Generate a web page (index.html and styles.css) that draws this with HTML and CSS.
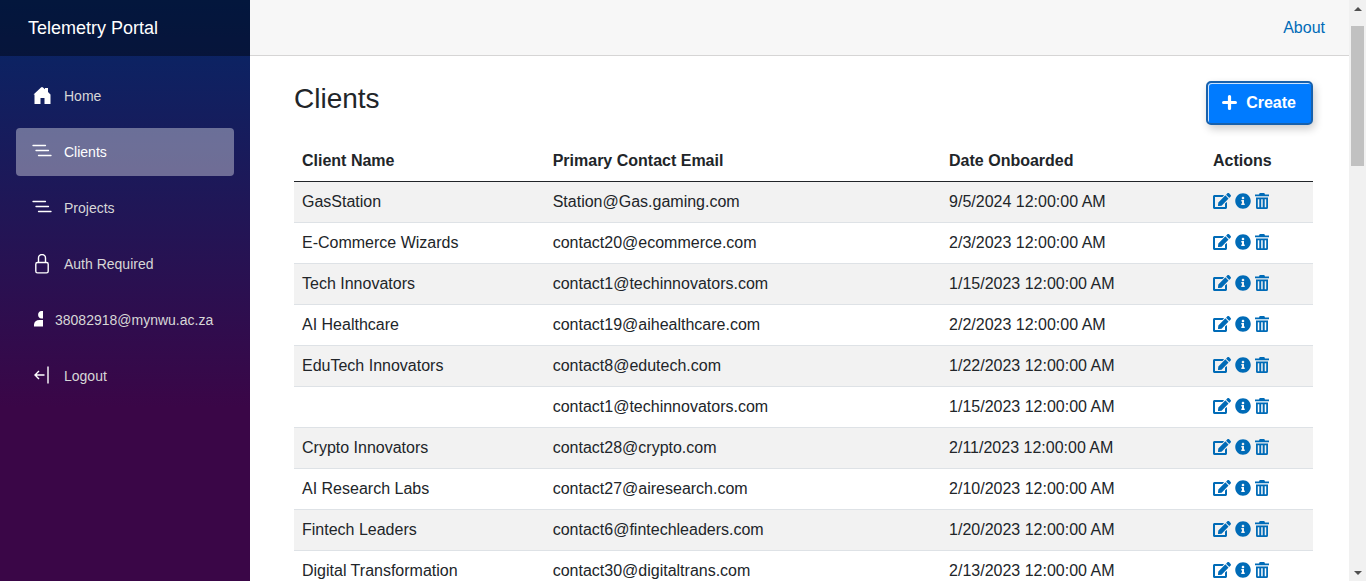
FILE: index.html
```
<!DOCTYPE html>
<html lang="en">
<head>
<meta charset="utf-8">
<title>Clients - Telemetry Portal</title>
<link rel="stylesheet" href="styles.css">
</head>
<body>
<svg class="sprite" aria-hidden="true">
  <symbol id="i-edit" viewBox="0 0 576 512"><path d="M402.600 83.200l90.200 90.200c3.800 3.800 3.800 10 0 13.800L274.400 405.600l-92.800 10.300c-12.400 1.400-22.900-9.100-21.500-21.500l10.300-92.800L388.800 83.200c3.800-3.800 10-3.800 13.800 0zm162-22.900l-48.800-48.800c-15.200-15.200-39.900-15.200-55.200 0l-35.400 35.400c-3.800 3.800-3.800 10 0 13.800l90.200 90.200c3.800 3.800 10 3.800 13.800 0l35.400-35.400c15.200-15.300 15.200-40 0-55.200zM384 346.200V448H64V128h229.800c3.200 0 6.200-1.300 8.500-3.500l40-40c7.600-7.600 2.200-20.500-8.500-20.500H48C21.500 64 0 85.500 0 112v352c0 26.500 21.500 48 48 48h352c26.500 0 48-21.500 48-48V306.200c0-10.700-12.900-16-20.500-8.500l-40 40c-2.200 2.300-3.500 5.300-3.500 8.500z"/></symbol>
  <symbol id="i-info" viewBox="0 0 512 512"><path d="M256 8C119 8 8 119.100 8 256c0 137 111 248 248 248s248-111 248-248C504 119.100 393 8 256 8zm0 110c23.200 0 42 18.800 42 42s-18.800 42-42 42-42-18.800-42-42 18.800-42 42-42zm56 254c0 6.600-5.400 12-12 12h-88c-6.600 0-12-5.400-12-12v-24c0-6.600 5.400-12 12-12h12v-64h-12c-6.600 0-12-5.400-12-12v-24c0-6.600 5.400-12 12-12h64c6.600 0 12 5.400 12 12v100h12c6.600 0 12 5.400 12 12v24z"/></symbol>
  <symbol id="i-trash" viewBox="0 0 14 16"><path fill-rule="evenodd" d="M0 1.500h4L4.700 0h4.600L10 1.500h4v1.800H0zM1 4.600h12V14.500q0 1.500-1.500 1.500h-9Q1 16 1 14.500zM2.800 6.200v8h1.500v-8zM6.200 6.200v8h1.500v-8zM9.700 6.200v8h1.500v-8z"/></symbol>
  <symbol id="i-list" viewBox="0 1 20 20"><path d="M1 4.500h12.500M4 9.500h12.500M6.500 14.500h12.500" fill="none" stroke="currentColor" stroke-width="1.300" stroke-linecap="round"/></symbol>
</svg>
<div class="page">
  <div class="sidebar">
    <div class="brand-row"><a class="brand" href="#">Telemetry Portal</a></div>
    <nav class="nav">
      <a class="nav-link" href="#"><svg class="nav-icon" viewBox="0 1 20 20"><path d="M1.500 9.500L9 2.500q1-1 2 0L13 4.300V3h3v4L18.500 9.500V19h-6v-6h-4v6h-6V9.500z" fill="currentColor"/></svg><span>Home</span></a>
      <a class="nav-link active" href="#"><svg class="nav-icon"><use href="#i-list"/></svg><span>Clients</span></a>
      <a class="nav-link" href="#"><svg class="nav-icon"><use href="#i-list"/></svg><span>Projects</span></a>
      <a class="nav-link" href="#"><svg class="nav-icon" viewBox="0 0 20 20"><path d="M6.500 8.500V4a3.500 3.500 0 0 1 7 0V8.500M5.500 8.500h9q1.700 0 1.700 1.700v7q0 1.700-1.700 1.700h-9q-1.700 0-1.700-1.700v-7q0-1.700 1.700-1.700z" fill="none" stroke="currentColor" stroke-width="1.400"/></svg><span>Auth Required</span></a>
      <a class="nav-link user" href="#"><svg class="nav-icon" viewBox="0 1 12 20"><path d="M11 2v7.500H9.500C5 9.500 5 2 9.500 2zM11 11v6.500H2V15.500Q2.500 11 7.500 11z" fill="currentColor"/></svg><span>38082918@mynwu.ac.za</span></a>
      <a class="nav-link" href="#"><svg class="nav-icon" viewBox="0 1 20 20"><path d="M16 1.500v17M12.500 10H3.500M7 6l-4 4 4 4" fill="none" stroke="currentColor" stroke-width="1.400"/></svg><span>Logout</span></a>
    </nav>
  </div>
  <main class="main">
    <div class="top-row"><a class="about" href="#">About</a></div>
    <article class="content">
      <header class="heading">
        <h1 class="title">Clients</h1>
        <button class="create" type="button"><svg class="plus" viewBox="0 0 14 14"><path d="M7 1.500v11M1.500 7h11" stroke="currentColor" stroke-width="3" stroke-linecap="round"/></svg>Create</button>
      </header>
      <table class="table">
        <thead><tr><th class="c-name">Client Name</th><th class="c-mail">Primary Contact Email</th><th class="c-date">Date Onboarded</th><th>Actions</th></tr></thead>
        <tbody id="rows"></tbody>
      </table>
    </article>
  </main>
  <div class="scrollbar" aria-hidden="true">
    <span class="arrow up"></span><span class="track"><span class="thumb"></span></span><span class="arrow down"></span>
  </div>
</div>
<script src="clients.js"></script>
</body>
</html>
```
FILE: clients.js
```
const clients = [
  ["GasStation", "Station@Gas.gaming.com", "9/5/2024"],
  ["E-Commerce Wizards", "contact20@ecommerce.com", "2/3/2023"],
  ["Tech Innovators", "contact1@techinnovators.com", "1/15/2023"],
  ["AI Healthcare", "contact19@aihealthcare.com", "2/2/2023"],
  ["EduTech Innovators", "contact8@edutech.com", "1/22/2023"],
  ["", "contact1@techinnovators.com", "1/15/2023"],
  ["Crypto Innovators", "contact28@crypto.com", "2/11/2023"],
  ["AI Research Labs", "contact27@airesearch.com", "2/10/2023"],
  ["Fintech Leaders", "contact6@fintechleaders.com", "1/20/2023"],
  ["Digital Transformation", "contact30@digitaltrans.com", "2/13/2023"]
];
const action = (icon, label) =>
  `<a class="action" href="#" aria-label="${label}"><svg class="icon ${icon}"><use href="#i-${icon}"/></svg></a>`;
document.getElementById("rows").innerHTML = clients.map(([name, mail, date]) =>
  `<tr><td>${name}</td><td>${mail}</td><td>${date} 12:00:00 AM</td><td><div class="actions">` +
  action("edit", "Edit") + action("info", "Details") + action("trash", "Delete") +
  `</div></td></tr>`).join("");
```
FILE: styles.css
```
*, *::before, *::after { box-sizing: border-box; }
body {
  margin: 0;
  font: 16px/24px "Liberation Sans", Arial, sans-serif;
  color: #212529;
  background: #fff;
}
a { color: #006bb7; text-decoration: none; }
.sprite { display: none; }
.page { display: flex; height: 100vh; overflow: hidden; }

.sidebar {
  flex: 0 0 250px;
  background: linear-gradient(180deg, #052767 0%, #3a0647 70%);
}
.brand-row {
  display: flex;
  align-items: center;
  height: 56px;
  padding-left: 28px;
  background: rgba(0, 0, 0, 0.4);
}
.brand { color: #fff; font-size: 18px; }
.nav { display: flex; flex-direction: column; gap: 8px; padding: 16px; }
.nav-link {
  display: flex;
  align-items: center;
  gap: 12px;
  height: 48px;
  padding: 0 16px;
  border-radius: 4px;
  color: #d7d7d7;
  font-size: 14px;
}
.nav-link.active { color: #fff; background: rgba(255, 255, 255, 0.37); }
.nav-icon { width: 20px; height: 20px; color: #fff; }
.user { gap: 11px; }
.user .nav-icon { width: 12px; }

.main { flex: 1; min-width: 0; }
.top-row {
  display: flex;
  align-items: center;
  justify-content: flex-end;
  height: 56px;
  padding-right: 24px;
  border-bottom: 1px solid #d6d5d5;
  background: #f7f7f7;
}
.content { padding: 25px 36px 0 44px; }
.heading { display: flex; justify-content: space-between; margin-bottom: 16px; }
.title { margin: 0; font-size: 28px; line-height: 36px; font-weight: 400; }
.create {
  display: flex;
  align-items: center;
  gap: 9px;
  height: 44px;
  padding: 0 15px 1px 14px;
  border: 2px solid #1861ac;
  border-radius: 5px;
  background: #007bff;
  box-shadow: inset 1px 1px 0 rgba(255, 255, 255, 0.8), 2px 4px 8px rgba(0, 0, 0, 0.2);
  color: #fff;
  font: bold 16px/24px "Liberation Sans", Arial, sans-serif;
}
.plus { width: 15px; height: 15px; }

.table { width: 100%; border-collapse: collapse; table-layout: fixed; }
.table th { padding: 8px; text-align: left; border-bottom: 1px solid #212529; }
.table td { height: 41px; padding: 8px; border-bottom: 1px solid #dee2e6; white-space: nowrap; }
.table tbody tr:nth-child(odd) { background: #f2f2f2; }
.c-name { width: 24.6%; }
.c-mail { width: 38.9%; }
.c-date { width: 25.9%; }
.actions { display: flex; align-items: center; gap: 4px; height: 24px; padding-bottom: 2px; }
.action { display: flex; }
.icon { height: 16px; fill: currentColor; }
.icon.edit { width: 18px; }
.icon.info { width: 16px; }
.icon.trash { width: 14px; }

.scrollbar { flex: 0 0 17px; display: flex; flex-direction: column; background: #f1f1f1; }
.arrow { display: flex; align-items: center; justify-content: center; height: 17px; }
.arrow::before { content: ""; border: 4px solid transparent; }
.up::before { border-top: 0; border-bottom-color: #505050; }
.down::before { border-bottom: 0; border-top-color: #505050; }
.track { flex: 1; padding: 9px 2px 0; }
.thumb { display: block; height: 26%; background: #c1c1c1; }
```
